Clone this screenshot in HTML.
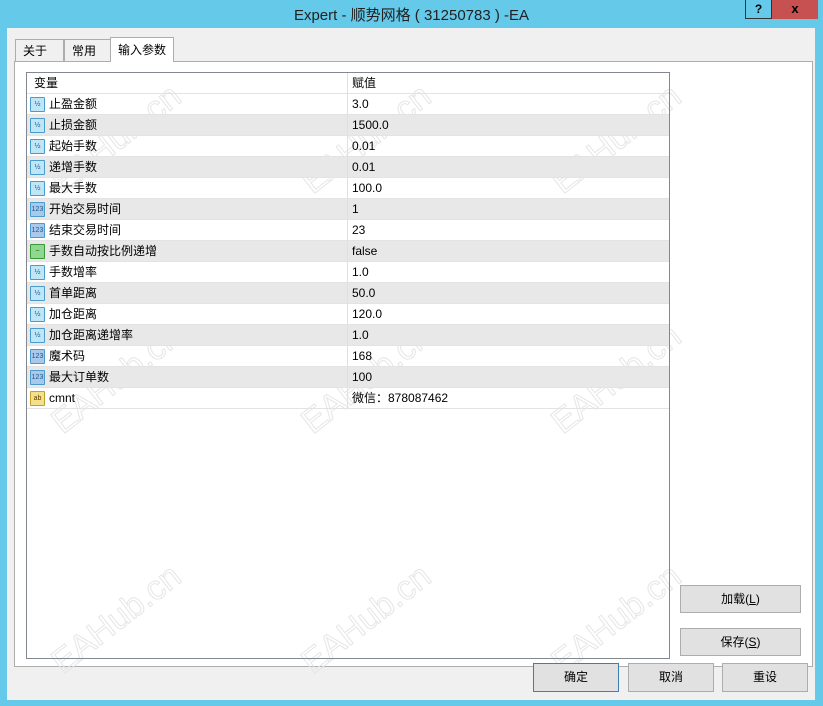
<html><head><style>
body{margin:0;width:823px;height:706px;background:#65c9ea;font-family:"Liberation Sans","Noto Sans CJK SC",sans-serif;font-size:12px;position:relative;overflow:hidden}
.a{position:absolute}
.title{left:0;top:0;width:823px;text-align:center;top:4px;font-size:15px;color:#222}
.client{left:7px;top:28px;width:808px;height:672px;background:#f0f0f0}
.tab{top:39px;height:22px;border:1px solid #adadad;border-bottom:none;background:#f0f0f0;line-height:22px;padding:0 0 0 7px;box-sizing:border-box;white-space:nowrap;overflow:hidden}
.panel{left:14px;top:61px;width:799px;height:606px;border:1px solid #adadad;background:#fff;box-sizing:border-box}
.tbl{left:26px;top:72px;width:644px;height:587px;border:1px solid #828790;box-sizing:border-box;background:#fff}
.row{position:absolute;left:0;width:642px;height:21px;border-bottom:1px solid #e3e3e3;box-sizing:border-box;line-height:20px}
.row.g{background:#e8e8e8}
.c1{position:absolute;left:22px}
.c2{position:absolute;left:325px;top:0}
.vl{position:absolute;left:320px;top:0;width:1px;height:20px;background:#e0e0e0}
.ic{position:absolute;left:3px;top:3px;width:13px;height:13px;border:1px solid #4a9ccf;background:#bfe6f6;font-size:7px;line-height:13px;text-align:center;color:#1d5a8a;border-radius:1px}
.btn{border:1px solid #adadad;background:#e1e1e1;text-align:center;box-sizing:border-box;font-size:12px}
.wm{color:transparent;-webkit-text-stroke:1px #e6e6e6;font-size:34px;transform:rotate(-38deg);font-family:"Liberation Sans",sans-serif;white-space:nowrap;z-index:0}
.tbl,.btn{z-index:1}
.row span{position:absolute}
</style></head><body>
<div class="a title">Expert - 顺势网格 ( 31250783 ) -EA</div>
<div class="a" style="left:745px;top:0;width:27px;height:19px;border:1px solid #333;border-top:none;box-sizing:border-box;text-align:center;font-weight:bold;line-height:18px">?</div>
<div class="a" style="left:772px;top:0;width:46px;height:19px;background:#c75050;text-align:center;font-weight:bold;line-height:18px;font-size:13px">x</div>
<div class="a client"></div>
<div class="a tab" style="left:15px;width:49px">关于</div>
<div class="a tab" style="left:64px;width:47px">常用</div>
<div class="a tab" style="left:110px;top:37px;height:25px;width:64px;background:#fff;z-index:2;line-height:24px">输入参数</div>
<div class="a panel"></div>
<div class="a wm" style="left:40px;top:120px">EAHub.cn</div>
<div class="a wm" style="left:290px;top:120px">EAHub.cn</div>
<div class="a wm" style="left:540px;top:120px">EAHub.cn</div>
<div class="a wm" style="left:40px;top:360px">EAHub.cn</div>
<div class="a wm" style="left:290px;top:360px">EAHub.cn</div>
<div class="a wm" style="left:540px;top:360px">EAHub.cn</div>
<div class="a wm" style="left:40px;top:600px">EAHub.cn</div>
<div class="a wm" style="left:290px;top:600px">EAHub.cn</div>
<div class="a wm" style="left:540px;top:600px">EAHub.cn</div>
<div class="a tbl" style="background:transparent">
<div class="row" style="top:0;border-bottom:1px solid #e3e3e3"><span style="position:absolute;left:7px">变量</span><div class="vl"></div><span class="c2">赋值</span></div>
<div class="row" style="top:21px"><div class="ic">½</div><span class="c1">止盈金额</span><div class="vl"></div><span class="c2">3.0</span></div>
<div class="row g" style="top:42px"><div class="ic">½</div><span class="c1">止损金额</span><div class="vl"></div><span class="c2">1500.0</span></div>
<div class="row" style="top:63px"><div class="ic">½</div><span class="c1">起始手数</span><div class="vl"></div><span class="c2">0.01</span></div>
<div class="row g" style="top:84px"><div class="ic">½</div><span class="c1">递增手数</span><div class="vl"></div><span class="c2">0.01</span></div>
<div class="row" style="top:105px"><div class="ic">½</div><span class="c1">最大手数</span><div class="vl"></div><span class="c2">100.0</span></div>
<div class="row g" style="top:126px"><div class="ic" style="background:#a8c8ec">123</div><span class="c1">开始交易时间</span><div class="vl"></div><span class="c2">1</span></div>
<div class="row" style="top:147px"><div class="ic" style="background:#a8c8ec">123</div><span class="c1">结束交易时间</span><div class="vl"></div><span class="c2">23</span></div>
<div class="row g" style="top:168px"><div class="ic" style="background:#8fd88f;border-color:#3a9a3a;color:#185018">~</div><span class="c1">手数自动按比例递增</span><div class="vl"></div><span class="c2">false</span></div>
<div class="row" style="top:189px"><div class="ic">½</div><span class="c1">手数增率</span><div class="vl"></div><span class="c2">1.0</span></div>
<div class="row g" style="top:210px"><div class="ic">½</div><span class="c1">首单距离</span><div class="vl"></div><span class="c2">50.0</span></div>
<div class="row" style="top:231px"><div class="ic">½</div><span class="c1">加仓距离</span><div class="vl"></div><span class="c2">120.0</span></div>
<div class="row g" style="top:252px"><div class="ic">½</div><span class="c1">加仓距离递增率</span><div class="vl"></div><span class="c2">1.0</span></div>
<div class="row" style="top:273px"><div class="ic" style="background:#a8c8ec">123</div><span class="c1">魔术码</span><div class="vl"></div><span class="c2">168</span></div>
<div class="row g" style="top:294px"><div class="ic" style="background:#a8c8ec">123</div><span class="c1">最大订单数</span><div class="vl"></div><span class="c2">100</span></div>
<div class="row" style="top:315px"><div class="ic" style="background:#f5e08a;border-color:#c0a030;color:#604000">ab</div><span class="c1">cmnt</span><div class="vl"></div><span class="c2">微信：878087462</span></div>
</div>
<div class="a btn" style="left:680px;top:585px;width:121px;height:28px;line-height:26px">加载(<u>L</u>)</div>
<div class="a btn" style="left:680px;top:628px;width:121px;height:28px;line-height:26px">保存(<u>S</u>)</div>
<div class="a btn" style="left:533px;top:663px;width:86px;height:29px;line-height:27px;border-color:#3c7fb1">确定</div>
<div class="a btn" style="left:628px;top:663px;width:86px;height:29px;line-height:27px">取消</div>
<div class="a btn" style="left:722px;top:663px;width:86px;height:29px;line-height:27px">重设</div>
</body></html>
